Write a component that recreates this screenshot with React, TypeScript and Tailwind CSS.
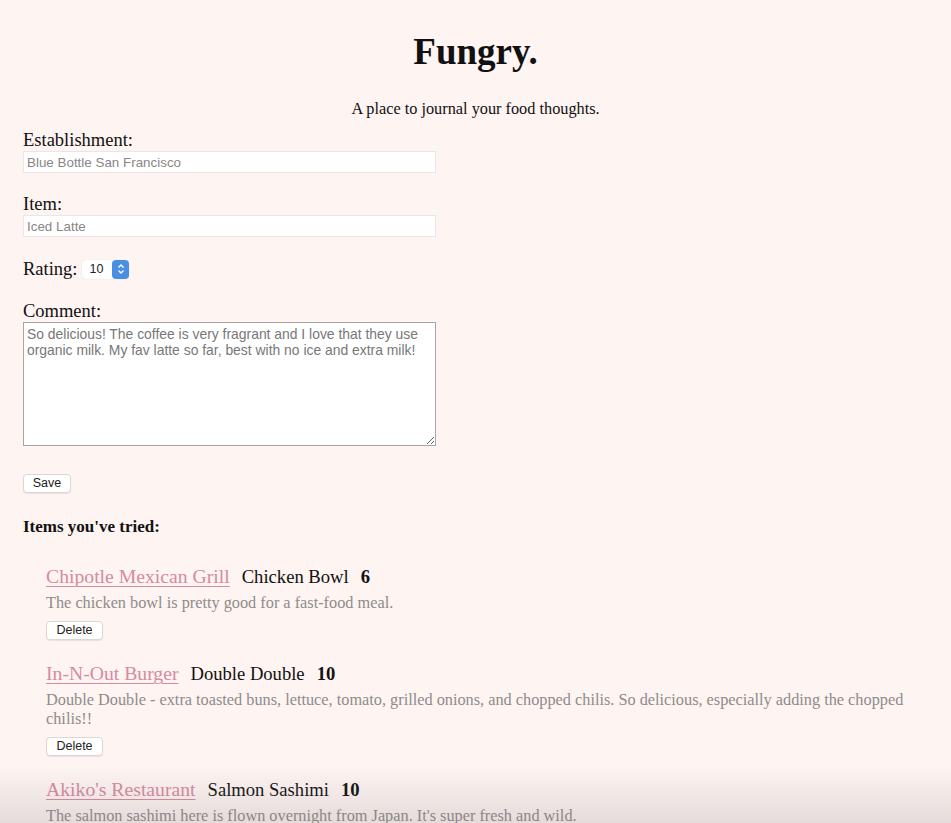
const items = [
  {
    place: 'Chipotle Mexican Grill',
    item: 'Chicken Bowl',
    rating: 6,
    comment: 'The chicken bowl is pretty good for a fast-food meal.',
  },
  {
    place: 'In-N-Out Burger',
    item: 'Double Double',
    rating: 10,
    comment:
      'Double Double - extra toasted buns, lettuce, tomato, grilled onions, and chopped chilis. So delicious, especially adding the chopped chilis!!',
  },
  {
    place: "Akiko's Restaurant",
    item: 'Salmon Sashimi',
    rating: 10,
    comment: "The salmon sashimi here is flown overnight from Japan. It's super fresh and wild.",
  },
]

const MacButton = ({ children, className = '' }: { children: React.ReactNode; className?: string }) => (
  <button
    type="button"
    className={`block h-[19px] rounded-[4px] border border-[#dcd6d6] bg-white font-['Liberation_Sans',sans-serif] text-[12.5px] leading-none text-[#222] shadow-[0_1px_1px_rgba(0,0,0,0.08)] ${className}`}
  >
    {children}
  </button>
)

export default function App() {
  return (
    <div className="relative min-h-[823px] overflow-hidden bg-[#fef4f2] font-['Liberation_Serif',serif] text-[#111]">
      <div className="px-[23px] pt-[28px]">
        <h1 className="text-center text-[37px] font-bold leading-[48px]">Fungry.</h1>
        <p className="mt-[23px] text-center text-[16.3px] leading-[20px]">A place to journal your food thoughts.</p>

        <form className="mt-[11px] w-[413px]" onSubmit={(e) => e.preventDefault()}>
          <label className="block text-[18.5px] leading-[20px]">Establishment:</label>
          <input
            readOnly
            value="Blue Bottle San Francisco"
            className="mt-[1px] block h-[22px] w-full border border-[#ebe5e5] bg-white px-[3px] font-['Liberation_Sans',sans-serif] text-[13.4px] text-[#8a8686] outline-none"
          />

          <label className="mt-[21px] block text-[18.5px] leading-[20px]">Item:</label>
          <input
            readOnly
            value="Iced Latte"
            className="mt-[1px] block h-[22px] w-full border border-[#ebe5e5] bg-white px-[3px] font-['Liberation_Sans',sans-serif] text-[13.4px] text-[#8a8686] outline-none"
          />

          <div className="mt-[21px] flex h-[22px] items-center">
            <span className="text-[18.5px] leading-[22px]">Rating:</span>
            <div className="ml-[5px] flex h-[19px] items-center rounded-[4px] bg-white shadow-[0_0_1px_rgba(0,0,0,0.2)]">
              <span className="pl-[7px] pr-[9px] font-['Liberation_Sans',sans-serif] text-[12.5px] text-[#222]">10</span>
              <span className="flex h-[19px] w-[17px] items-center justify-center rounded-[4px] bg-[#4a90e2]">
                <svg width="8" height="12" viewBox="0 0 8 12" fill="none" stroke="white" strokeWidth="1.4">
                  <path d="M1.5 4.5 L4 2 L6.5 4.5" />
                  <path d="M1.5 7.5 L4 10 L6.5 7.5" />
                </svg>
              </span>
            </div>
          </div>

          <label className="mt-[21px] block text-[18.5px] leading-[20px]">Comment:</label>
          <textarea
            readOnly
            value="So delicious! The coffee is very fragrant and I love that they use organic milk. My fav latte so far, best with no ice and extra milk!"
            className="mt-[1px] block h-[124px] w-full resize-y border border-[#aaa4a4] bg-white px-[3px] py-[3px] font-['Liberation_Sans',sans-serif] text-[13.9px] leading-[16px] text-[#777] outline-none"
          />

          <MacButton className="mt-[28px] w-[48px]">Save</MacButton>
        </form>

        <h2 className="mt-[23px] text-[17px] font-bold leading-[22px]">Items you&apos;ve tried:</h2>

        <ul className="mt-[27px] pl-[23px]">
          {items.map((it) => (
            <li key={it.place} className="mb-[22px]">
              <div className="flex items-baseline text-[18.6px] leading-[22px]">
                <a href="#" className="text-[19.7px] text-[#d88aa0] underline decoration-1 underline-offset-[3px]">
                  {it.place}
                </a>
                <span className="ml-[12px]">{it.item}</span>
                <span className="ml-[12px] font-bold">{it.rating}</span>
              </div>
              <p className="mt-[5px] text-[16.3px] leading-[19px] text-[#8f8b8b]">{it.comment}</p>
              <MacButton className="mt-[9px] w-[57px]">Delete</MacButton>
            </li>
          ))}
        </ul>
      </div>
      <div className="pointer-events-none absolute inset-x-0 bottom-0 h-[110px] bg-gradient-to-b from-transparent to-[rgba(120,110,112,0.35)]" />
    </div>
  )
}
